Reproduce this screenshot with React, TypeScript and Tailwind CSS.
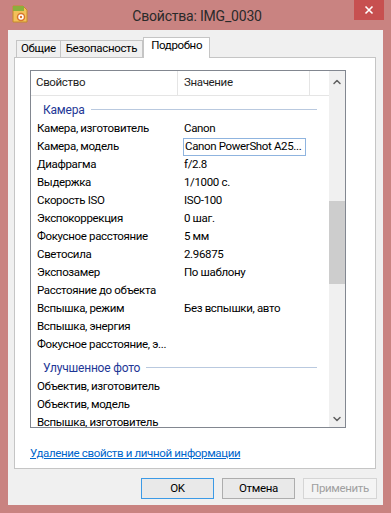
import { ChevronUp, ChevronDown } from 'lucide-react'

type Row = { name: string; value?: string; focused?: boolean }

const cameraRows: Row[] = [
  { name: 'Камера, изготовитель', value: 'Canon' },
  { name: 'Камера, модель', value: 'Canon PowerShot A25...', focused: true },
  { name: 'Диафрагма', value: 'f/2.8' },
  { name: 'Выдержка', value: '1/1000 с.' },
  { name: 'Скорость ISO', value: 'ISO-100' },
  { name: 'Экспокоррекция', value: '0 шаг.' },
  { name: 'Фокусное расстояние', value: '5 мм' },
  { name: 'Светосила', value: '2.96875' },
  { name: 'Экспозамер', value: 'По шаблону' },
  { name: 'Расстояние до объекта' },
  { name: 'Вспышка, режим', value: 'Без вспышки, авто' },
  { name: 'Вспышка, энергия' },
  { name: 'Фокусное расстояние, э...' },
]

const photoRows: Row[] = [
  { name: 'Объектив, изготовитель' },
  { name: 'Объектив, модель' },
  { name: 'Вспышка, изготовитель' },
]

const font = { fontFamily: 'Roboto, "Noto Sans", sans-serif' }

function GroupHeader({ title }: { title: string }) {
  return (
    <div className="h-[24px] pt-[4px] flex items-center pl-[12px] pr-[12px]">
      <span className="text-[12px] tracking-[-0.2px] text-[#1e3796] mr-[6px] whitespace-nowrap">{title}</span>
      <div className="flex-1 h-px bg-[#b9c9df] -mt-[2px]" />
    </div>
  )
}

function PropRow({ row }: { row: Row }) {
  return (
    <div className="h-[18px] flex items-center text-[11.5px] tracking-[-0.35px] text-black whitespace-nowrap">
      <div className="w-[147px] pl-[6px] overflow-hidden">{row.name}</div>
      <div className="w-[132px] flex items-center h-full">
        {row.focused ? (
          <div className="h-[18px] w-[123px] ml-[5px] border border-[#8fb4df] flex items-center pl-[1px] overflow-hidden">
            {row.value}
          </div>
        ) : (
          <span className="pl-[6px]">{row.value}</span>
        )}
      </div>
    </div>
  )
}

function JpgIcon() {
  return (
    <svg width="16" height="18" viewBox="0 0 16 18">
      <path d="M1 1h10l4 4v12H1z" fill="#f3c15a" stroke="#c68b2a" />
      <rect x="1" y="1" width="11" height="5" fill="#8cae3c" />
      <circle cx="9" cy="12" r="3.5" fill="#fff" stroke="#d9772d" strokeWidth="1.5" />
      <circle cx="9" cy="12" r="1.2" fill="#d9772d" />
    </svg>
  )
}

export default function App() {
  return (
    <div className="w-[391px] h-[513px] bg-[#c98381] flex flex-col overflow-hidden" style={font}>
      <div className="h-[30px] flex items-start">
        <div className="pl-[12px] pt-[5px]">
          <JpgIcon />
        </div>
        <div className="flex-1 text-center text-[14px] tracking-[-0.2px] text-[#2a2a2a] pt-[6px] pl-[12px]">
          Свойства: IMG_0030
        </div>
        <div className="w-[30px] h-[20px] bg-[#c75050] mr-[7px] flex items-center justify-center">
          <svg width="10" height="10" viewBox="0 0 10 10">
            <path d="M1.5 1.5l7 7M8.5 1.5l-7 7" stroke="#fff" strokeWidth="1.6" />
          </svg>
        </div>
      </div>

      <div className="mx-[8px] h-[475px] bg-[#f0f0f0] flex flex-col pt-[7px]">
        <div className="flex items-end h-[20px] pl-[8px] text-[11.5px] tracking-[-0.35px] text-black">
          <div className="h-[17px] px-[4px] pb-[1px] border border-b-0 border-[#c5c5c5] bg-[#f0f0f0] flex items-center">Общие</div>
          <div className="h-[17px] px-[5px] pb-[1px] border border-b-0 border-l-0 border-[#c5c5c5] bg-[#f0f0f0] flex items-center">Безопасность</div>
          <div className="h-[21px] px-[7px] pb-[4px] border border-b-0 border-[#c5c5c5] bg-white flex items-center -mb-px relative z-10">Подробно</div>
        </div>

        <div className="ml-[6px] mr-[7px] h-[412px] bg-white border border-[#c5c5c5] flex flex-col pt-[12px] pl-[15px] pr-[29px]">
          <div className="h-[358px] border border-[#828790] flex">
            <div className="flex-1 flex flex-col overflow-hidden">
              <div className="h-[25px] flex border-b border-[#e5e5e5] text-[11.5px] tracking-[-0.35px] text-[#1f1f1f] shrink-0">
                <div className="w-[147px] pl-[5px] flex items-center border-r border-[#e5e5e5]">Свойство</div>
                <div className="w-[132px] pl-[6px] flex items-center border-r border-[#e5e5e5]">Значение</div>
                <div className="flex-1" />
              </div>
              <div className="flex-1 overflow-hidden">
                <GroupHeader title="Камера" />
                {cameraRows.map((r) => (
                  <PropRow key={r.name} row={r} />
                ))}
                <GroupHeader title="Улучшенное фото" />
                {photoRows.map((r) => (
                  <PropRow key={r.name} row={r} />
                ))}
              </div>
            </div>
            <div className="w-[16px] bg-[#f0f0f0] flex flex-col items-center">
              <div className="h-[20px] flex items-center justify-center text-[#606060] pt-[2px]">
                <ChevronUp size={12} strokeWidth={3} />
              </div>
              <div className="h-[110px]" />
              <div className="w-full h-[83px] bg-[#cdcdcd]" />
              <div className="flex-1" />
              <div className="h-[20px] flex items-center justify-center text-[#606060] pt-[4px]">
                <ChevronDown size={12} strokeWidth={3} />
              </div>
            </div>
          </div>
          <div className="pt-[12px]">
            <span className="text-[11.5px] tracking-[-0.35px] text-[#0066cc] underline">Удаление свойств и личной информации</span>
          </div>
        </div>

        <div className="flex justify-end gap-[8px] pr-[6px] pt-[9px] text-[11.5px] tracking-[-0.35px]">
          <div className="w-[73px] h-[21px] border border-[#3c9ae6] bg-[#e9e9e9] flex items-center justify-center text-black">OK</div>
          <div className="w-[73px] h-[21px] border border-[#adadad] bg-[#e9e9e9] flex items-center justify-center text-black">Отмена</div>
          <div className="w-[74px] h-[21px] border border-[#d5d5d5] bg-[#f4f4f4] flex items-center justify-center text-[#a0a0a0]">Применить</div>
        </div>
      </div>
    </div>
  )
}
